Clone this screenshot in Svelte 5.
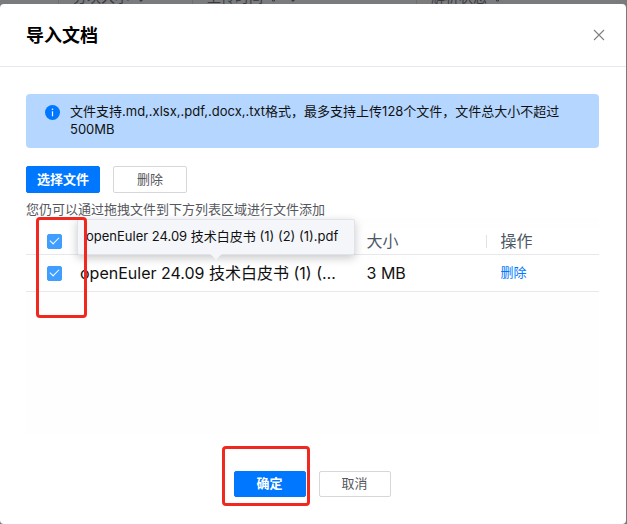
<script>
  const columns = [
    { title: "分块大小", sort: true, filter: false },
    { title: "上传时间", sort: true, filter: true },
    { title: "解析状态", sort: false, filter: true },
  ];

  let files = $state([
    { name: "openEuler 24.09 技术白皮书 (1) (2) (1).pdf", size: "3 MB", checked: true },
  ]);
  let allChecked = $derived(files.length > 0 && files.every((f) => f.checked));

  function toggleAll(e) {
    const checked = e.currentTarget.checked;
    files.forEach((f) => (f.checked = checked));
  }

  function removeChecked() {
    files = files.filter((f) => !f.checked);
  }

  function remove(e, file) {
    e.preventDefault();
    files = files.filter((f) => f !== file);
  }
</script>

<div class="page">
  <div class="behind" aria-hidden="true">
    {#each columns as column}
      <div class="behind-col">
        <span>{column.title}</span>
        {#if column.filter}
          <svg class="filter" width="10" height="10" viewBox="0 0 10 10">
            <path d="M1.5 1v8h2V1M6 7.5h4" fill="none" stroke="currentColor" />
          </svg>
        {/if}
        {#if column.sort}
          <svg width="8" height="10" viewBox="0 0 8 10">
            <path d="M0 6h8L4 10z" fill="currentColor" />
          </svg>
        {/if}
      </div>
    {/each}
  </div>

  <div class="dialog" role="dialog" aria-labelledby="dialog-title">
    <header>
      <h1 id="dialog-title">导入文档</h1>
      <button class="close" aria-label="关闭">
        <svg width="12" height="12" viewBox="0 0 12 12">
          <path d="M1 1l10 10M11 1L1 11" fill="none" stroke="#7d8084" stroke-width="1.1" />
        </svg>
      </button>
    </header>

    <main>
      <div class="notice">
        <svg width="15" height="15" viewBox="0 0 15 15">
          <circle cx="7.5" cy="7.5" r="7.5" fill="#0077ff" />
          <path d="M7.5 6.3v5" stroke="#fff" stroke-width="1.2" />
          <circle cx="7.5" cy="4.2" r="0.8" fill="#fff" />
        </svg>
        <p>文件支持.md,.xlsx,.pdf,.docx,.txt格式，最多支持上传128个文件，文件总大小不超过500MB</p>
      </div>

      <div class="actions">
        <button class="btn primary">选择文件</button>
        <button class="btn" onclick={removeChecked}>删除</button>
      </div>
      <p class="tip">您仍可以通过拖拽文件到下方列表区域进行文件添加</p>

      <div class="drop-area">
        <table>
          <thead>
            <tr>
              <th class="col-check">
                <input type="checkbox" aria-label="全选" checked={allChecked} onchange={toggleAll} />
                <span class="mark mark-list"></span>
              </th>
              <th class="col-name"></th>
              <th class="col-size"><span>大小</span></th>
              <th class="col-action">操作</th>
            </tr>
          </thead>
          <tbody>
            {#each files as file}
              <tr>
                <td class="col-check">
                  <input type="checkbox" aria-label={file.name} bind:checked={file.checked} />
                </td>
                <td class="col-name">
                  <div class="name">{file.name}</div>
                  <div class="tooltip" role="tooltip">{file.name}</div>
                </td>
                <td class="col-size">{file.size}</td>
                <td class="col-action">
                  <a href="#delete" onclick={(e) => remove(e, file)}>删除</a>
                </td>
              </tr>
            {/each}
          </tbody>
        </table>
      </div>
    </main>

    <footer>
      <div class="confirm">
        <button class="btn primary">确定</button>
        <span class="mark mark-confirm"></span>
      </div>
      <button class="btn">取消</button>
    </footer>
  </div>
</div>

<style>
  :global(body) {
    margin: 0;
    background: #78797b;
  }

  .page {
    display: flex;
    flex-direction: column;
    min-height: 100vh;
    padding-right: 1px;
    box-sizing: border-box;
    font-family: Inter, "Noto Sans CJK SC", sans-serif;
    font-size: 13px;
    color: #111;
  }

  .behind {
    display: grid;
    grid-template-columns: 134px 224px 1fr;
    align-content: end;
    height: 4px;
    padding-left: 58px;
    overflow: hidden;
    background: #7a7b7d;
    color: #3a3c40;
  }

  .behind-col {
    display: flex;
    align-items: center;
    gap: 8px;
    height: 15px;
    padding-left: 14px;
    border-left: 1px solid #6c6e71;
    font-size: 14px;
    line-height: 15px;
  }

  .dialog {
    flex: 1;
    display: flex;
    flex-direction: column;
    background: #fff;
    border-radius: 4px;
  }

  header {
    display: flex;
    align-items: center;
    justify-content: space-between;
    height: 62px;
    padding: 0 20px 0 26px;
    border-bottom: 1px solid #e4e8f0;
  }

  h1 {
    margin: 0;
    padding-top: 2px;
    font-size: 18px;
    line-height: 24px;
    font-weight: 700;
    color: #000;
  }

  button {
    font-family: inherit;
    cursor: pointer;
  }

  .close {
    display: flex;
    padding: 1px;
    border: 0;
    background: none;
  }

  main {
    padding: 27px 27px 0 26px;
  }

  .notice {
    display: flex;
    gap: 10px;
    padding: 8px 19px 10px;
    border-radius: 4px;
    background: #b5d7ff;
  }

  .notice svg {
    flex: none;
    margin-top: 3px;
  }

  p {
    margin: 0;
    line-height: 18px;
  }

  .actions {
    display: flex;
    gap: 13px;
    margin: 18px 0 7px;
  }

  .btn {
    width: 74px;
    height: 27px;
    padding: 0 0 2px;
    border: 1px solid #d5d7da;
    border-radius: 2px;
    background: #fff;
    color: #55585e;
    font-size: 13px;
    line-height: 18px;
  }

  .btn.primary {
    border-color: #0077ff;
    background: #0077ff;
    color: #fff;
    font-weight: 700;
  }

  .tip {
    color: #55585e;
  }

  .drop-area {
    min-height: 206px;
    padding-top: 10px;
    background: #fefefe;
  }

  table {
    width: 100%;
    table-layout: fixed;
    border-collapse: collapse;
    background: #fff;
    font-size: 16px;
  }

  th,
  td {
    position: relative;
    height: 36px;
    padding: 0;
    border-bottom: 1px solid #e6e8eb;
    text-align: left;
    line-height: 24px;
    color: #111;
  }

  th {
    height: 26px;
    font-size: 16px;
    font-weight: 400;
    color: #4e5865;
  }

  .col-check {
    width: 54px;
    padding-left: 21px;
    box-sizing: border-box;
  }

  .col-name {
    width: 50%;
  }

  .col-size {
    width: 134px;
  }

  th.col-size span {
    display: block;
    line-height: 13px;
    border-right: 1px solid #dfe3e8;
    margin-right: 14px;
  }

  input {
    appearance: none;
    position: relative;
    display: block;
    width: 15px;
    height: 15px;
    margin: 0;
    border: 1px solid #c3c8d0;
    border-radius: 2px;
    background: #fff;
  }

  input:checked {
    border-color: #409eff;
    background: #409eff;
  }

  input:checked::after {
    content: "";
    position: absolute;
    left: 2px;
    top: 2px;
    width: 8px;
    height: 4px;
    border: solid #fff;
    border-width: 0 0 1px 1px;
    transform: rotate(-45deg);
  }

  .name {
    width: 260px;
    overflow: hidden;
    white-space: nowrap;
    text-overflow: ellipsis;
  }

  .tooltip {
    position: absolute;
    left: -3px;
    bottom: 36px;
    padding: 7px 16px 9px 8px;
    border: 1px solid #e0e4ea;
    border-radius: 2px;
    background: #f4f6fa;
    box-shadow: 0 3px 10px rgba(0, 0, 0, 0.22);
    font-size: 13px;
    line-height: 18px;
    white-space: nowrap;
  }

  .tooltip::after {
    content: "";
    position: absolute;
    left: 50%;
    bottom: -4px;
    width: 8px;
    height: 8px;
    margin-left: -4px;
    background: #f4f6fa;
    transform: rotate(45deg);
  }

  a {
    display: block;
    padding-bottom: 2px;
    color: #0077ff;
    font-size: 13px;
    text-decoration: none;
  }

  footer {
    display: flex;
    justify-content: center;
    gap: 13px;
    margin-top: auto;
    padding: 0 2px 27px 0;
  }

  footer .btn {
    width: 72px;
    height: 26px;
  }

  .confirm {
    position: relative;
    display: flex;
  }

  .mark {
    position: absolute;
    z-index: 1;
    box-sizing: border-box;
    border: 3px solid #f02820;
    border-radius: 4px;
    pointer-events: none;
  }

  .mark-list {
    left: 10px;
    top: -11px;
    width: 51px;
    height: 101px;
  }

  .mark-confirm {
    inset: -25px -4px -9px -12px;
  }
</style>
